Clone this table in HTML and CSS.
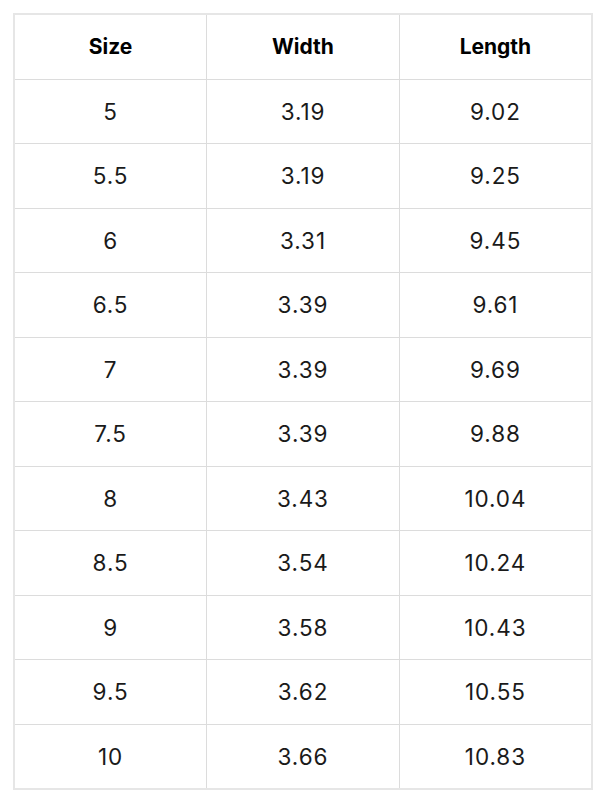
FILE: index.html
```html
<!DOCTYPE html>
<html>
<head>
<meta charset="utf-8">
<link rel="stylesheet" href="styles.css">
</head>
<body>
<table class="sizes">
  <thead>
    <tr><th>Size</th><th>Width</th><th>Length</th></tr>
  </thead>
  <tbody>
    <tr><td>5</td><td>3.19</td><td>9.02</td></tr>
    <tr><td>5.5</td><td>3.19</td><td>9.25</td></tr>
    <tr><td>6</td><td>3.31</td><td>9.45</td></tr>
    <tr><td>6.5</td><td>3.39</td><td>9.61</td></tr>
    <tr><td>7</td><td>3.39</td><td>9.69</td></tr>
    <tr><td>7.5</td><td>3.39</td><td>9.88</td></tr>
    <tr><td>8</td><td>3.43</td><td>10.04</td></tr>
    <tr><td>8.5</td><td>3.54</td><td>10.24</td></tr>
    <tr><td>9</td><td>3.58</td><td>10.43</td></tr>
    <tr><td>9.5</td><td>3.62</td><td>10.55</td></tr>
    <tr><td>10</td><td>3.66</td><td>10.83</td></tr>
  </tbody>
</table>
</body>
</html>
```
FILE: styles.css
```css
html, body {
  margin: 0;
  padding: 0;
  background: #ffffff;
}
body {
  padding: 13px 0 0 13px;
  font-family: Inter, "Noto Sans", sans-serif;
  color: #111111;
}
.sizes {
  border-collapse: collapse;
  width: 580px;
  table-layout: fixed;
  border: 2px solid #e6e6e6;
}
.sizes th,
.sizes td {
  border: 1px solid #dcdcdc;
  height: 63.5px;
  padding: 0;
  text-align: center;
  vertical-align: middle;
}
.sizes th {
  font-size: 21px;
  font-weight: 700;
  color: #000000;
}
.sizes td {
  font-size: 22.5px;
  font-weight: 400;
  letter-spacing: 0.9px;
  color: #1a1a1a;
}
```
